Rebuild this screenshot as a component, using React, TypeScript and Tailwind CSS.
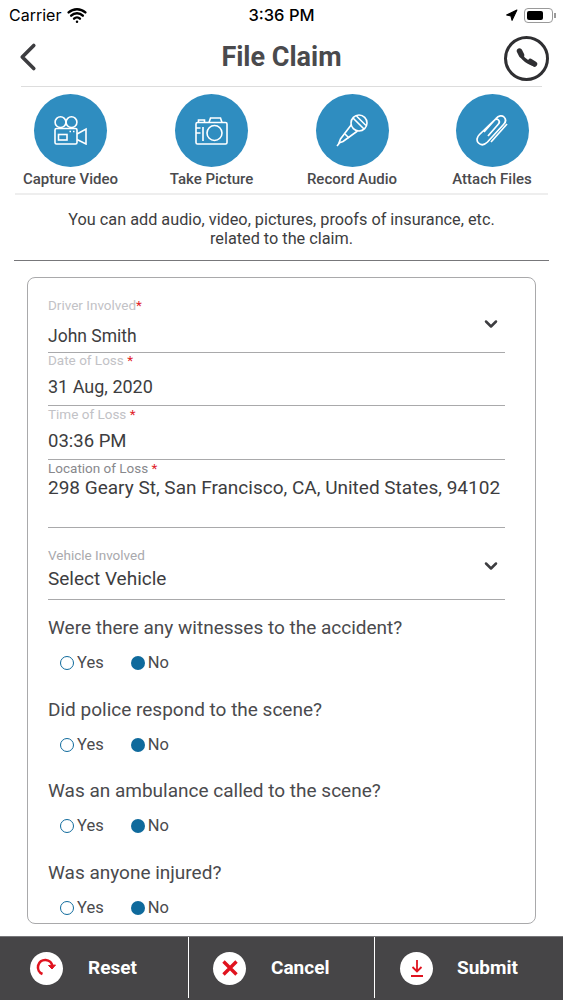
import React from 'react';
import { ChevronDown, Navigation, Wifi, ChevronLeft } from 'lucide-react';

const font = { fontFamily: 'Roboto, sans-serif' };

const VideoIcon = () => (
  <svg width="33" height="29" viewBox="0 0 33 29" fill="none" stroke="white" strokeWidth="1.6">
    <circle cx="6.5" cy="6.2" r="5.4" />
    <circle cx="17.500" cy="6.2" r="5.4" />
    <rect x="1" y="12.500" width="22" height="15.500" rx="1.5" />
    <path d="M23 18l9-5v15l-9-4.500" />
    <rect x="4.500" y="18.500" width="8.500" height="5.500" />
    <path d="M15.500 15.500h1.500M19 15.500h1.500" />
  </svg>
);

const CameraIcon = () => (
  <svg width="33" height="28" viewBox="0 0 33 28" fill="none" stroke="white" strokeWidth="1.6">
    <rect x="1" y="5.500" width="31" height="21.500" rx="1.5" />
    <path d="M3.500 5.500V3h6v2.500M14 5.500l1.500-4.500h10l1.500 4.500" />
    <circle cx="19.500" cy="16" r="7.500" />
    <path d="M8 10v14M1 11h4.500M1 16h4.500" />
  </svg>
);

const MicIcon = () => (
  <svg width="32" height="33" viewBox="0 0 32 33" fill="none" stroke="white" strokeWidth="1.6">
    <circle cx="23" cy="9" r="8" />
    <path d="M17 4l11 11M20.500 2l9.500 9.500" />
    <path d="M15.500 10.500L4.500 25l-1.500 4 4-1.500L21.500 17" />
    <path d="M1 32l2.500-3M9 20l4 4" />
  </svg>
);

const ClipIcon = () => (
  <svg width="32" height="33" viewBox="0 0 32 33" fill="none" stroke="white" strokeWidth="1.7">
    <path d="M8 18L20 4.500c2.500-3 6-3.500 8-1.500s2 5-.500 7.500L11.500 28c-3 3-6.500 3.500-9 1s-1.500-6 1-8.500L18 6.500c1.500-1.500 3.500-1.500 4.500-.500s1 3-.500 4.500L12 22" />
    <path d="M31 10L15 28" />
  </svg>
);

const PhoneGlyph = () => (
  <svg width="22" height="20" viewBox="0 0 22 20" fill="none" stroke="#2f2f32" strokeLinecap="round">
    <path d="M4 3c0 5 5 11 14 13.500" strokeWidth="3.400" />
    <path d="M3.500 3l2 4" strokeWidth="5.500" />
    <path d="M14.500 13.500l4 2.500" strokeWidth="5.500" />
  </svg>
);

const actions = [
  { label: 'Capture Video', icon: <VideoIcon /> },
  { label: 'Take Picture', icon: <CameraIcon /> },
  { label: 'Record Audio', icon: <MicIcon /> },
  { label: 'Attach Files', icon: <ClipIcon /> },
];

const Label = ({ text, gap = true }: { text: string; gap?: boolean }) => (
  <div className="text-[13.5px] leading-[15px] text-[#c2c2c6]">
    {text}
    {gap ? ' ' : ''}
    <span className="text-[#e0222a]">*</span>
  </div>
);

const Radio = () => (
  <div className="flex items-center pl-[12px] text-[16.5px] leading-[20px] text-[#4a4a4d]">
    <span className="w-[14px] h-[14px] rounded-full border-[1.5px] border-[#0f6a9c]" />
    <span className="ml-[3px]">Yes</span>
    <span className="ml-[27px] w-[14px] h-[14px] rounded-full bg-[#0f6a9c]" />
    <span className="ml-[3px]">No</span>
  </div>
);

const questions = [
  'Were there any witnesses to the accident?',
  'Did police respond to the scene?',
  'Was an ambulance called to the scene?',
  'Was anyone injured?',
];

export default function App() {
  return (
    <div className="w-[563px] h-[1000px] bg-white flex flex-col overflow-hidden" style={font}>
      {/* Status bar */}
      <div className="h-[30px] flex items-center justify-between pl-[9px] pr-[7px] text-black shrink-0">
        <div className="w-[150px] flex items-center gap-[6px] text-[16px]" style={{ fontFamily: 'Inter, sans-serif' }}>
          <span>Carrier</span>
          <Wifi size={20} strokeWidth={3} />
        </div>
        <div className="text-[16.5px] font-medium -ml-[2px]" style={{ fontFamily: 'Inter, sans-serif' }}>3:36 PM</div>
        <div className="w-[150px] flex items-center justify-end gap-[6px]">
          <Navigation size={13} fill="black" />
          <div className="w-[29px] h-[15px] rounded-[4px] border border-[#9a9a9a] p-[2px]">
            <div className="w-[16px] h-full rounded-[2px] bg-black" />
          </div>
          <div className="w-[1.5px] h-[5px] bg-[#9a9a9a] -ml-[5px]" />
        </div>
      </div>

      {/* Header */}
      <div className="mx-[21px] h-[57px] flex items-center justify-between border-b border-[#dddddd] shrink-0 relative">
        <ChevronLeft size={46} strokeWidth={1.9} className="text-[#3d3d40] -ml-[16px] -mt-[2px]" />
        <h1 className="absolute inset-x-0 top-[9px] text-center text-[27px] leading-[36px] font-bold text-[#4a4a4d]">File Claim</h1>
        <div className="w-[45px] h-[45px] rounded-full border-[3px] border-[#2f2f32] flex items-center justify-center -mr-[7px]">
          <PhoneGlyph />
        </div>
      </div>

      {/* Attachment buttons */}
      <div className="h-[106px] grid grid-cols-[141px_141px_140px_140px] shrink-0 pt-[7px]">
        {actions.map((a) => (
          <div key={a.label} className="flex flex-col items-center">
            <div className="w-[73px] h-[73px] rounded-full bg-[#2f8dc0] flex items-center justify-center">{a.icon}</div>
            <div className="mt-[2px] text-[15px] leading-[20px] font-medium text-[#4a4a4d]">{a.label}</div>
          </div>
        ))}
      </div>
      <div className="mx-[15px] h-[2px] bg-[#eeeeee] shrink-0" />

      <div className="h-[66px] mx-[14px] border-b border-[#77777a] pt-[15px] text-center text-[16.25px] leading-[19px] text-[#3d3d40] shrink-0">
        You can add audio, video, pictures, proofs of insurance, etc.
        <br />
        related to the claim.
      </div>

      {/* Form card */}
      <div className="mx-[27px] mt-[16px] h-[647px] rounded-[8px] border border-[#a9a9ab] pl-[20px] pr-[30px] pt-[20px] shrink-0 overflow-hidden">
        <div className="h-[55px] border-b border-[#a9a9ab] relative">
          <Label text="Driver Involved" gap={false} />
          <div className="mt-[12px] text-[17.5px] leading-[22px] text-[#3d3d40]">John Smith</div>
          <ChevronDown size={20} strokeWidth={3} className="absolute right-[4px] top-[16px] text-[#3d3d40]" />
        </div>
        <div className="h-[53px] border-b border-[#a9a9ab]">
          <Label text="Date of Loss" />
          <div className="mt-[8px] text-[18px] leading-[22px] text-[#3d3d40]">31 Aug, 2020</div>
        </div>
        <div className="h-[54px] border-b border-[#a9a9ab] pt-[1px]">
          <Label text="Time of Loss" />
          <div className="mt-[8px] text-[18.5px] leading-[22px] text-[#3d3d40]">03:36 PM</div>
        </div>
        <div className="h-[68px] border-b border-[#a9a9ab] pt-[1px]">
          <div className="text-[13.5px] leading-[15px] text-[#88888c]">
            Location of Loss <span className="text-[#e0222a]">*</span>
          </div>
          <div className="mt-[1px] text-[19px] leading-[22px] text-[#3d3d40] whitespace-nowrap">298 Geary St, San Francisco, CA, United States, 94102</div>
        </div>
        <div className="h-[72px] border-b border-[#a9a9ab] pt-[20px] relative">
          <div className="text-[13.5px] leading-[15px] text-[#a9a9ad]">Vehicle Involved</div>
          <div className="mt-[5px] text-[19px] leading-[22px] text-[#3d3d40]">Select Vehicle</div>
          <ChevronDown size={20} strokeWidth={3} className="absolute right-[4px] top-[28px] text-[#3d3d40]" />
        </div>
        <div className="pt-[17px] flex flex-col gap-[25.7px]">
          {questions.map((q) => (
            <div key={q}>
              <div className="text-[19px] leading-[22px] text-[#4a4a4d]">{q}</div>
              <div className="mt-[14px]">
                <Radio />
              </div>
            </div>
          ))}
        </div>
      </div>

      {/* Footer */}
      <div className="mt-[12px] h-[64px] bg-[#464547] border-t border-[#77777a] grid grid-cols-[189px_186px_188px] shrink-0">
        <FooterButton label="Reset" pad="pl-[30px]" gap="ml-[25px]" border>
          <svg width="24" height="24" viewBox="0 0 24 24" fill="none" stroke="#e0131f" strokeWidth="2.6">
            <path d="M7.500 18A7.300 7.300 0 1 1 17.500 10.500" />
            <path d="M20.500 9l-3.500 4-3.500-3.500z" fill="#e0131f" strokeWidth="1" />
          </svg>
        </FooterButton>
        <FooterButton label="Cancel" pad="pl-[24px]" gap="ml-[25px]" border>
          <svg width="22" height="22" viewBox="0 0 22 22" fill="none" stroke="#e0131f" strokeWidth="3.400">
            <path d="M4.500 4.500l13 13M17.500 4.500l-13 13" />
          </svg>
        </FooterButton>
        <FooterButton label="Submit" pad="pl-[25px]" gap="ml-[24px]">
          <svg width="22" height="22" viewBox="0 0 22 22" fill="none" stroke="#e0131f" strokeWidth="1.800">
            <path d="M11 3v11M6.500 10l4.500 4.500 4.500-4.500M5 19h12" />
          </svg>
        </FooterButton>
      </div>
    </div>
  );
}

function FooterButton({ label, pad, gap, border, children }: { label: string; pad: string; gap: string; border?: boolean; children: React.ReactNode }) {
  return (
    <div className="relative flex items-center pb-[1px]">
      <div className={`flex items-center ${pad}`}>
        <div className="w-[33px] h-[33px] rounded-full bg-white flex items-center justify-center shrink-0">{children}</div>
        <span className={`${gap} text-[19px] font-bold text-white`}>{label}</span>
      </div>
      {border && <div className="absolute right-0 top-0 h-[61px] w-px bg-white" />}
    </div>
  );
}
